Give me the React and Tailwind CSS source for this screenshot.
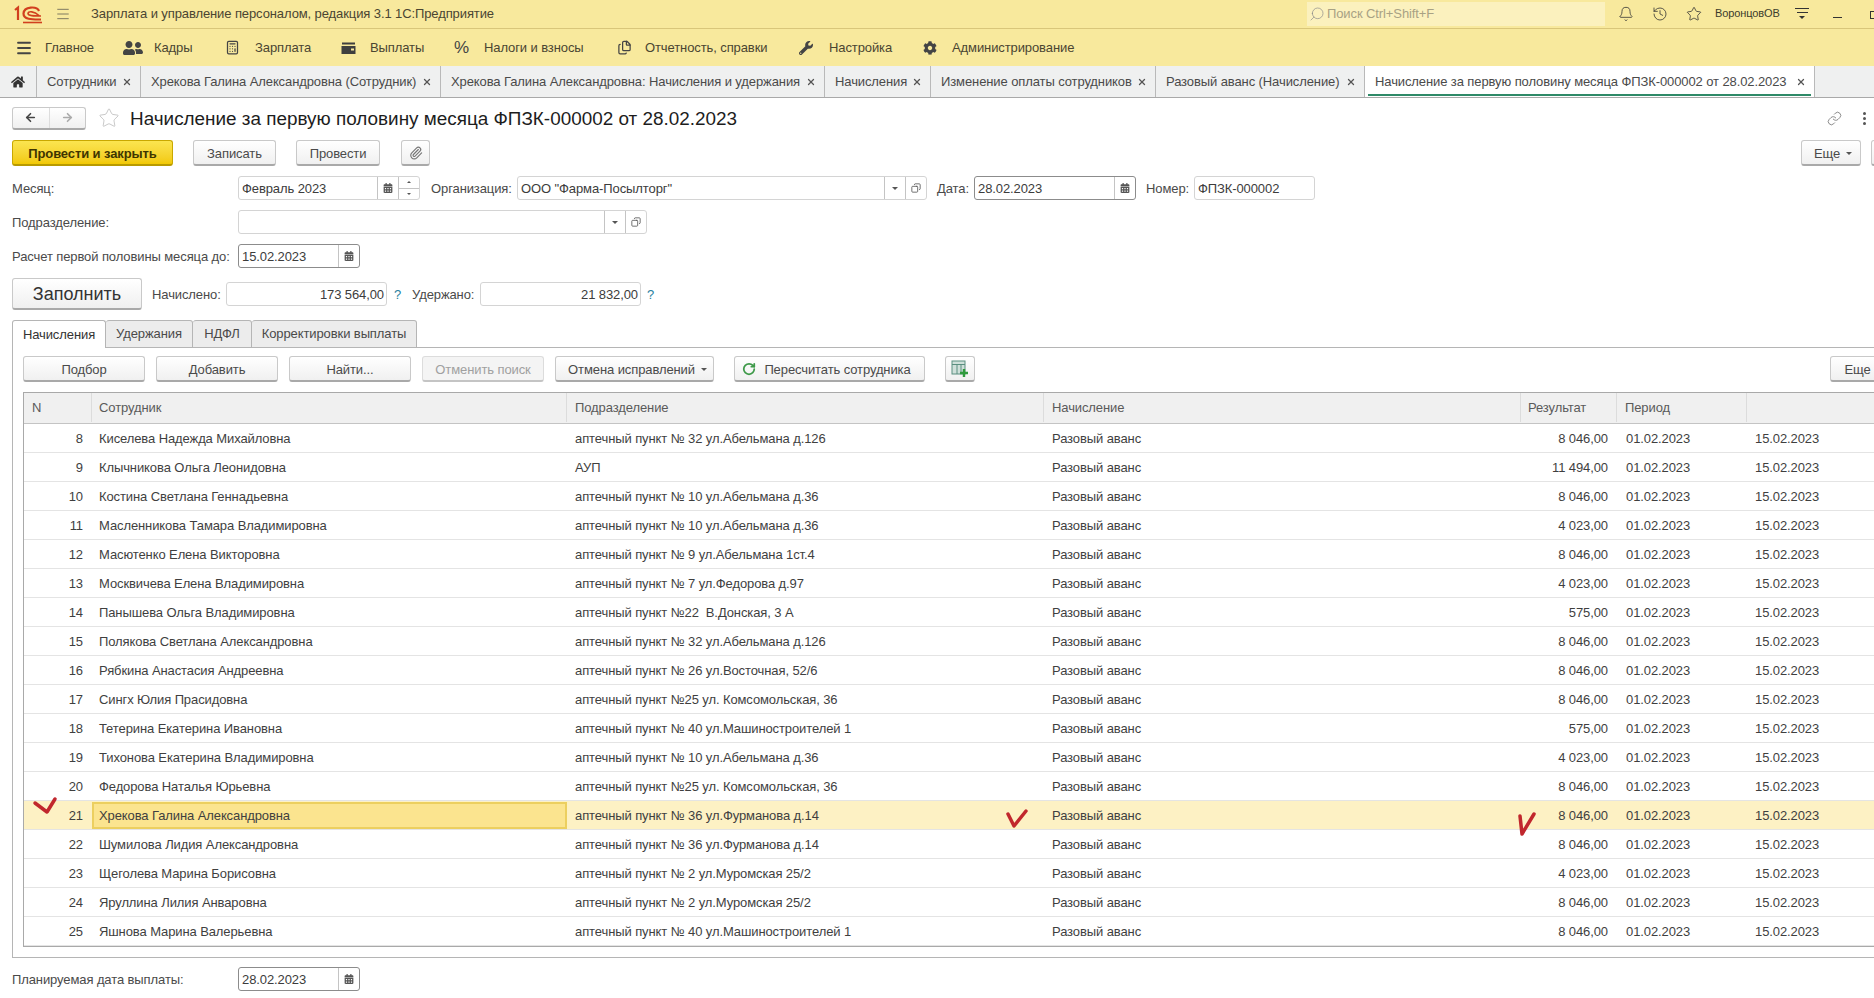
import { ArrowLeft, ArrowRight, Bell, Calculator, Copy, Files, History, Link, Menu, Paperclip, RotateCw, Search, Star, X } from "lucide-react";
import { FaCog, FaHome, FaUserFriends, FaWrench, FaCalendarAlt } from "react-icons/fa";

const rows = [
  [8, "Киселева Надежда Михайловна", "аптечный пункт № 32 ул.Абельмана д.126", "8 046,00"],
  [9, "Клычникова Ольга Леонидовна", "АУП", "11 494,00"],
  [10, "Костина Светлана Геннадьевна", "аптечный пункт № 10 ул.Абельмана д.36", "8 046,00"],
  [11, "Масленникова Тамара Владимировна", "аптечный пункт № 10 ул.Абельмана д.36", "4 023,00"],
  [12, "Масютенко Елена Викторовна", "аптечный пункт № 9 ул.Абельмана 1ст.4", "8 046,00"],
  [13, "Москвичева Елена Владимировна", "аптечный пункт № 7 ул.Федорова д.97", "4 023,00"],
  [14, "Панышева Ольга Владимировна", "аптечный пункт №22  В.Донская, 3 А", "575,00"],
  [15, "Полякова Светлана Александровна", "аптечный пункт № 32 ул.Абельмана д.126", "8 046,00"],
  [16, "Рябкина Анастасия Андреевна", "аптечный пункт № 26 ул.Восточная, 52/6", "8 046,00"],
  [17, "Сингх Юлия Прасидовна", "аптечный пункт №25 ул. Комсомольская, 36", "8 046,00"],
  [18, "Тетерина Екатерина Ивановна", "аптечный пункт № 40 ул.Машиностроителей 1", "575,00"],
  [19, "Тихонова Екатерина Владимировна", "аптечный пункт № 10 ул.Абельмана д.36", "4 023,00"],
  [20, "Федорова Наталья Юрьевна", "аптечный пункт №25 ул. Комсомольская, 36", "8 046,00"],
  [21, "Хрекова Галина Александровна", "аптечный пункт № 36 ул.Фурманова д.14", "8 046,00"],
  [22, "Шумилова Лидия Александровна", "аптечный пункт № 36 ул.Фурманова д.14", "8 046,00"],
  [23, "Щеголева Марина Борисовна", "аптечный пункт № 2 ул.Муромская 25/2", "4 023,00"],
  [24, "Яруллина Лилия Анваровна", "аптечный пункт № 2 ул.Муромская 25/2", "8 046,00"],
  [25, "Яшнова Марина Валерьевна", "аптечный пункт № 40 ул.Машиностроителей 1", "8 046,00"],
];

const tabs = [
  ["Сотрудники", "w-[104px]"],
  ["Хрекова Галина Александровна (Сотрудник)", "w-[300px]"],
  ["Хрекова Галина Александровна: Начисления и удержания", "w-[384px]"],
  ["Начисления", "w-[106px]"],
  ["Изменение оплаты сотрудников", "w-[225px]"],
  ["Разовый аванс (Начисление)", "w-[209px]"],
];

const gridCols = "grid grid-cols-[68px_475px_477px_477px_96px_130px_200px]";
const btn = "flex shrink-0 items-center justify-center rounded-[3px] border border-[#c9c9c9] border-b-2 border-b-[#a9a9a9] bg-linear-to-b from-white to-[#f0f0f0] pt-[1px] text-[#4a4a4a]";

function Logo() {
  return (
    <svg width="30" height="20" viewBox="0 0 30 20" fill="none" stroke="#d1401f" strokeWidth="2.2">
      <path d="M2 6 L5 3.5 V16" />
      <path d="M26 7 C24 2 11 2 10.5 9.5 C10.5 16 20 15.5 28 15.5" />
      <path d="M26 11.5 C21 7 15.5 7 15 9.5 C15 12 21 12 28 12" strokeWidth="1.6" />
      <path d="M10 18.5 H29" strokeWidth="1.6" />
    </svg>
  );
}

function WalletIcon() {
  return (
    <svg width="15" height="12" viewBox="0 0 15 12" fill="#3f3f3f">
      <path d="M1 0.5 H14 V2.5 H1 Z M0.5 4 H14.5 V12 H0.5 Z" />
      <rect x="10" y="6.5" width="3" height="2" fill="#f8e99d" />
    </svg>
  );
}

function TablePlusIcon() {
  return (
    <svg width="18" height="18" viewBox="0 0 18 18" fill="none">
      <rect x="1" y="1" width="13" height="13" fill="#cfe0da" stroke="#5b8f80" />
      <path d="M1 4.5 H14 M6 4.5 V14 M10 4.5 V14" stroke="#5b8f80" />
      <path d="M13 9 V17 M9 13 H17" stroke="#2f9a3c" strokeWidth="2.4" />
    </svg>
  );
}

function Segment({ children }) {
  return <div className="flex h-full w-[21px] shrink-0 items-center justify-center border-l border-[#c4c4c4] text-[#555]">{children}</div>;
}

function CalendarSeg() {
  return (
    <Segment>
      <FaCalendarAlt size={10} />
    </Segment>
  );
}

function DropSeg() {
  return (
    <Segment>
      <span className="h-0 w-0 border-x-[3px] border-t-[3px] border-x-transparent border-t-[#555]"></span>
    </Segment>
  );
}

function OpenSeg() {
  return (
    <Segment>
      <Copy size={10} className="-scale-x-100" />
    </Segment>
  );
}

function SpinSeg() {
  return (
    <div className="flex h-full w-[21px] shrink-0 flex-col border-l border-[#c4c4c4] text-[#555]">
      <div className="flex flex-1 items-center justify-center border-b border-[#c4c4c4]">
        <span className="h-0 w-0 border-x-[2px] border-b-[2px] border-x-transparent border-b-[#555]"></span>
      </div>
      <div className="flex flex-1 items-center justify-center">
        <span className="h-0 w-0 border-x-[2px] border-t-[2px] border-x-transparent border-t-[#555]"></span>
      </div>
    </div>
  );
}

function Field({ className, value, right, dark, children }) {
  return (
    <div className={`flex h-[24px] shrink-0 items-center rounded-[3px] border bg-white ${dark ? "border-[#8c8c8c]" : "border-[#d4d4d4]"} ${className}`}>
      <div className={`min-w-0 flex-1 px-[3px] text-[#3c3c3c] ${right ? "pr-[2px] text-right" : ""}`}>{value}</div>
      {children}
    </div>
  );
}

function RedMark({ className, width, height, d, stroke = 3 }) {
  return (
    <svg className={`absolute ${className}`} width={width} height={height} viewBox={`0 0 ${width} ${height}`} fill="none">
      <path d={d} stroke="#c1272d" strokeWidth={stroke} strokeLinecap="round" strokeLinejoin="round" />
    </svg>
  );
}

export default function App() {
  return (
    <div className="relative h-[998px] w-[1874px] overflow-hidden bg-white font-['Liberation_Sans',Arial,sans-serif] text-[13px] leading-none tracking-[-0.1px] text-[#4a4a4a]">
      {/* title bar */}
      <div className="flex h-[29px] items-center border-b border-[#d9c67a] bg-[#f8e99d] pb-[1px]">
        <div className="ml-[13px]"><Logo /></div>
        <Menu size={16} strokeWidth={1} className="ml-[12px] text-[#444]" />
        <div className="ml-[20px] flex-1 text-[#4a4532]">Зарплата и управление персоналом, редакция 3.1 1С:Предприятие</div>
        <div className="flex h-[24px] w-[298px] items-center bg-[#fbf1be] pl-[2px] text-[#a8a184]">
          <Search size={16} strokeWidth={1} className="-scale-x-100 text-[#888]" />
          <span className="ml-[2px]">Поиск Ctrl+Shift+F</span>
        </div>
        <Bell size={16} strokeWidth={1.2} className="ml-[13px] text-[#333]" />
        <History size={16} strokeWidth={1.2} className="ml-[18px] text-[#333]" />
        <Star size={16} strokeWidth={1.2} className="ml-[18px] text-[#333]" />
        <span className="ml-[13px] w-[66px] text-[11px] text-[#3c3c2c]">ВоронцовОВ</span>
        <div className="ml-[14px] flex w-[14px] flex-col items-center gap-[3px]">
          <span className="h-px w-[14px] bg-[#333]"></span>
          <span className="h-px w-[11px] bg-[#333]"></span>
          <span className="h-0 w-0 border-x-[3px] border-t-[3px] border-x-transparent border-t-[#333]"></span>
        </div>
        <span className="ml-[24px] mt-[8px] h-px w-[9px] bg-[#333]"></span>
        <span className="ml-[28px] -mr-[4px] mt-[2px] h-[8px] w-[8px] border border-[#333]"></span>
      </div>

      {/* section bar */}
      <div className="flex h-[37px] items-center bg-[#f8e99d] text-[#4a4532]">
        <Menu size={18} strokeWidth={2.4} className="ml-[15px] text-[#444]" />
        <span className="ml-[12px] w-[78px]">Главное</span>
        <FaUserFriends size={18} className="w-[20px] text-[#444]" />
        <span className="ml-[11px] w-[71px]">Кадры</span>
        <Calculator size={15} className="text-[#444]" />
        <span className="ml-[15px] w-[86px]">Зарплата</span>
        <WalletIcon />
        <span className="ml-[14px] w-[84px]">Выплаты</span>
        <span className="w-[30px] text-[17px] text-[#444]">%</span>
        <span className="w-[133px]">Налоги и взносы</span>
        <Files size={15} className="text-[#444]" />
        <span className="ml-[13px] w-[154px]">Отчетность, справки</span>
        <FaWrench size={14} className="text-[#444]" />
        <span className="ml-[16px] w-[94px]">Настройка</span>
        <FaCog size={14} className="text-[#444]" />
        <span className="ml-[15px]">Администрирование</span>
      </div>

      {/* open tabs */}
      <div className="flex h-[32px] border-b border-[#a9a9a9] bg-[#eff0f0] text-[#4a4a4a]">
        <div className="flex w-[37px] items-center justify-center border-r border-[#b9b9b9]">
          <FaHome size={14} className="text-[#333]" />
        </div>
        {tabs.map(([label, width]) => (
          <div key={label} className={`flex items-center justify-between border-r border-[#b9b9b9] pl-[10px] pr-[8px] ${width}`}>
            <span className="whitespace-nowrap">{label}</span>
            <X size={10} strokeWidth={3} className="shrink-0 text-[#555]" />
          </div>
        ))}
        <div className="relative flex w-[450px] items-center justify-between border-r border-[#b9b9b9] bg-white pl-[10px] pr-[8px]">
          <span className="whitespace-nowrap">Начисление за первую половину месяца ФПЗК-000002 от 28.02.2023</span>
          <X size={10} strokeWidth={3} className="shrink-0 text-[#555]" />
          <span className="absolute bottom-[1px] left-[3px] right-[3px] h-[2px] bg-[#2f8a68]"></span>
        </div>
      </div>

      {/* document title */}
      <div className="ml-[12px] mt-[9px] flex h-[22px] items-center">
        <div className="flex h-[23px] w-[74px] rounded-[3px] border border-[#c9c9c9] border-b-2 border-b-[#a9a9a9] bg-linear-to-b from-white to-[#f0f0f0]">
          <div className="flex flex-1 items-center justify-center border-r border-[#ddd] text-[#444]"><ArrowLeft size={13} strokeWidth={3} /></div>
          <div className="flex flex-1 items-center justify-center text-[#aaa]"><ArrowRight size={13} strokeWidth={3} /></div>
        </div>
        <Star size={22} strokeWidth={0.8} className="ml-[12px] text-[#b5b5b5]" />
        <h1 className="ml-[10px] pt-[2px] text-[18.9px] tracking-normal text-[#1d1d1d]">Начисление за первую половину месяца ФПЗК-000002 от 28.02.2023</h1>
        <div className="ml-auto flex items-center">
          <Link size={15} strokeWidth={1.2} className="text-[#666]" />
          <div className="ml-[21px] mr-[8px] flex flex-col gap-[2px]">
            <span className="h-[3px] w-[3px] rounded-full bg-[#555]"></span>
            <span className="h-[3px] w-[3px] rounded-full bg-[#555]"></span>
            <span className="h-[3px] w-[3px] rounded-full bg-[#555]"></span>
          </div>
        </div>
      </div>

      {/* command bar */}
      <div className="ml-[12px] mt-[11px] flex h-[26px] w-[1900px]">
        <button className="flex w-[161px] shrink-0 items-center justify-center rounded-[3px] border border-[#c9a800] border-b-2 border-b-[#b89a00] bg-linear-to-b from-[#fbe54f] to-[#f2c900] pt-[1px] font-bold text-[#3f3500]">Провести и закрыть</button>
        <button className={`${btn} ml-[20px] w-[83px]`}>Записать</button>
        <button className={`${btn} ml-[20px] w-[84px]`}>Провести</button>
        <button className={`${btn} ml-[21px] w-[29px]`}><Paperclip size={14} className="text-[#777]" /></button>
        <button className={`${btn} ml-[1371px] w-[60px] pl-[4px]`}>
          Еще
          <span className="ml-[6px] h-0 w-0 border-x-[3px] border-t-[3px] border-x-transparent border-t-[#555]"></span>
        </button>
        <button className={`${btn} ml-[10px] w-[30px]`}></button>
      </div>

      {/* header fields */}
      <div className="ml-[12px] mt-[10px] flex h-[24px] items-center">
        <span className="w-[226px]">Месяц:</span>
        <Field className="w-[182px]" value="Февраль 2023"><CalendarSeg /><SpinSeg /></Field>
        <span className="ml-[11px] w-[86px]">Организация:</span>
        <Field className="w-[410px]" value={'ООО "Фарма-Посылторг"'}><DropSeg /><OpenSeg /></Field>
        <span className="ml-[10px] w-[37px]">Дата:</span>
        <Field className="w-[162px]" dark value="28.02.2023"><CalendarSeg /></Field>
        <span className="ml-[10px] w-[48px]">Номер:</span>
        <Field className="w-[121px]" value="ФПЗК-000002" />
      </div>
      <div className="ml-[12px] mt-[10px] flex h-[24px] items-center">
        <span className="w-[226px]">Подразделение:</span>
        <Field className="w-[409px]" value=""><DropSeg /><OpenSeg /></Field>
      </div>
      <div className="ml-[12px] mt-[10px] flex h-[24px] items-center">
        <span className="w-[226px] whitespace-nowrap">Расчет первой половины месяца до:</span>
        <Field className="w-[122px]" dark value="15.02.2023"><CalendarSeg /></Field>
      </div>
      <div className="ml-[12px] mt-[10px] flex h-[32px] items-center">
        <button className={`${btn} h-full w-[130px] text-[18px] tracking-normal text-[#333]`}>Заполнить</button>
        <span className="ml-[10px] w-[74px]">Начислено:</span>
        <Field className="w-[161px]" right value="173 564,00" />
        <span className="ml-[7px] w-[18px] text-[#2a7f9e]">?</span>
        <span className="w-[68px]">Удержано:</span>
        <Field className="w-[161px]" right value="21 832,00" />
        <span className="ml-[6px] text-[#2a7f9e]">?</span>
      </div>

      {/* form tabs */}
      <div className="relative z-10 ml-[12px] mt-[10px] flex h-[28px] -mb-px">
        <div className="flex w-[94px] items-center justify-center rounded-t-[3px] border border-b-0 border-[#b5b5b5] bg-white pb-[1px] text-[#333]">Начисления</div>
        <div className="flex w-[87px] items-center justify-center rounded-t-[3px] border-y border-r border-[#b5b5b5] bg-[#ececec] pb-[1px]">Удержания</div>
        <div className="flex w-[59px] items-center justify-center rounded-t-[3px] border-y border-r border-[#b5b5b5] bg-[#ececec] pb-[1px]">НДФЛ</div>
        <div className="flex w-[165px] items-center justify-center rounded-t-[3px] border-y border-r border-[#b5b5b5] bg-[#ececec] pb-[1px]">Корректировки выплаты</div>
      </div>

      <div className="ml-[12px] w-[1900px] border border-[#b5b5b5] pb-[10px] pl-[10px] pt-[8px]">
        {/* table toolbar */}
        <div className="flex h-[26px]">
          <button className={`${btn} w-[122px]`}>Подбор</button>
          <button className={`${btn} ml-[11px] w-[122px]`}>Добавить</button>
          <button className={`${btn} ml-[11px] w-[122px]`}>Найти...</button>
          <button className="ml-[11px] flex w-[122px] shrink-0 items-center justify-center rounded-[3px] border border-[#dcdcdc] border-b-2 border-b-[#c4c4c4] bg-[#f4f4f4] pt-[1px] text-[#a0a0a0]">Отменить поиск</button>
          <button className={`${btn} ml-[11px] w-[159px] pl-[6px]`}>
            Отмена исправлений
            <span className="ml-[6px] h-0 w-0 border-x-[3px] border-t-[3px] border-x-transparent border-t-[#555]"></span>
          </button>
          <button className={`${btn} ml-[20px] w-[191px] pr-[6px]`}>
            <RotateCw size={14} strokeWidth={3} className="text-[#3f9a4a]" />
            <span className="ml-[8px]">Пересчитать сотрудника</span>
          </button>
          <button className={`${btn} ml-[20px] w-[30px]`}><TablePlusIcon /></button>
          <button className={`${btn} ml-[855px] w-[55px]`}>Еще</button>
        </div>

        {/* table */}
        <div className="mt-[10px] w-[1900px] border border-[#a9a9a9] text-[#3f3f3f]">
          <div className={`${gridCols} h-[31px] items-center border-b border-[#c4c4c4] bg-[#f0f0f0] pb-[1px] text-[#5a5a5a]`}>
            <div className="flex h-full items-center border-r border-[#dcdcdc] pl-[8px]">N</div>
            <div className="flex h-full items-center border-r border-[#dcdcdc] pl-[7px]">Сотрудник</div>
            <div className="flex h-full items-center border-r border-[#dcdcdc] pl-[8px]">Подразделение</div>
            <div className="flex h-full items-center border-r border-[#dcdcdc] pl-[8px]">Начисление</div>
            <div className="flex h-full items-center border-r border-[#dcdcdc] pl-[7px]">Результат</div>
            <div className="flex h-full items-center border-r border-[#dcdcdc] pl-[8px]">Период</div>
            <div></div>
          </div>
          {rows.map(([n, name, dept, sum]) => {
            const active = n === 21;
            return (
              <div key={n} className={`${gridCols} h-[29px] items-center border-b border-[#e4e4e4] ${active ? "bg-[#fdf1c4]" : ""}`}>
                <div className="pr-[9px] text-right">{n}</div>
                <div className={active ? "flex h-[27px] items-center border-2 border-[#eccf5f] bg-[#fbe48f] pl-[5px]" : "pl-[7px]"}>{name}</div>
                <div className="whitespace-pre pl-[8px]">{dept}</div>
                <div className="pl-[8px]">Разовый аванс</div>
                <div className="pr-[9px] text-right">{sum}</div>
                <div className="pl-[9px]">01.02.2023</div>
                <div className="pl-[8px]">15.02.2023</div>
              </div>
            );
          })}
        </div>
      </div>

      {/* planned payment date */}
      <div className="ml-[12px] mt-[9px] flex h-[24px] items-center">
        <span className="w-[226px]">Планируемая дата выплаты:</span>
        <Field className="w-[122px]" dark value="28.02.2023"><CalendarSeg /></Field>
      </div>

      {/* pen marks drawn over the screenshot */}
      <RedMark className="left-[32px] top-[796px]" width="26" height="19" d="M3 7 L15 16 L23 3" stroke={3.5} />
      <RedMark className="left-[1005px] top-[808px]" width="24" height="21" d="M3 6 L9 18 L21 3" stroke={3.5} />
      <RedMark className="left-[1517px] top-[811px]" width="20" height="26" d="M3 5 L5 23 L17 3" stroke={3.5} />
    </div>
  );
}
